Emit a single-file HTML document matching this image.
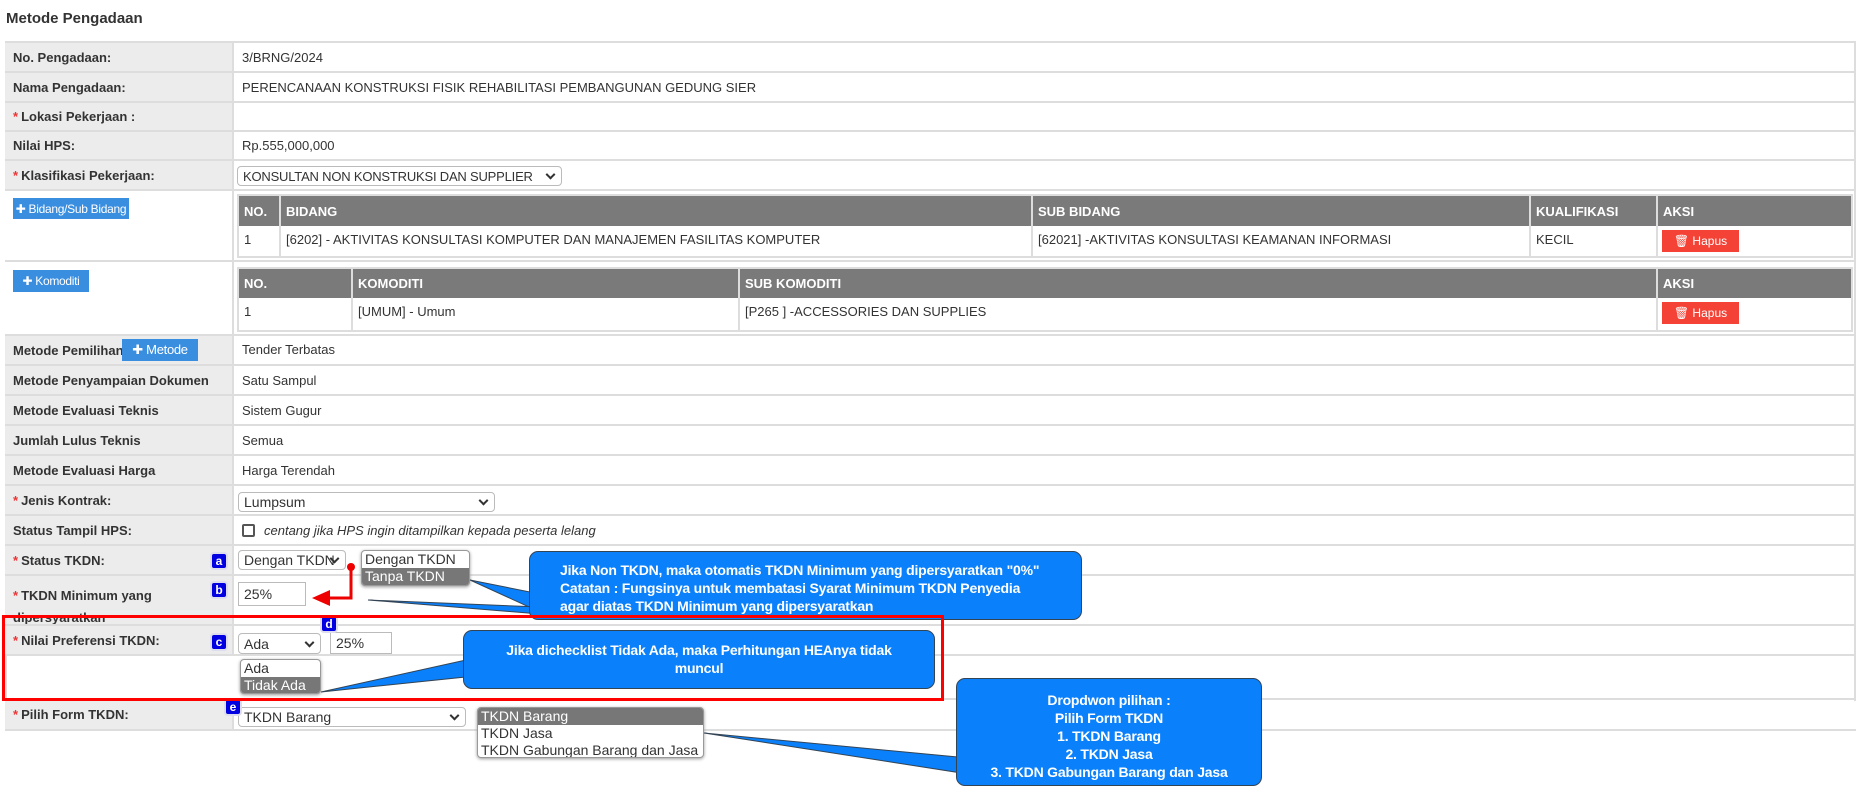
<!DOCTYPE html>
<html><head><meta charset="utf-8"><style>
*{box-sizing:border-box;margin:0;padding:0}
body{width:1860px;height:789px;background:#fff;font-family:"Liberation Sans",Arial,sans-serif;font-size:13px;color:#333;position:relative;overflow:hidden}
.a{position:absolute}
.row{position:absolute;left:5px;width:1851px;border-bottom:2px solid #ddd}
.lab{position:absolute;left:0;top:0;bottom:0;width:229px;background:#ececec;border-right:2px solid #ddd;font-weight:bold;padding-left:8px;display:flex;align-items:center;white-space:nowrap}
.val{position:absolute;left:237px;top:0;bottom:0;display:flex;align-items:center;white-space:nowrap}
.st{color:#e33;font-weight:bold;margin-right:3px}
.nt{position:absolute;border:2px solid #ddd;background:#fff}
.th{position:absolute;background:#7a7a7a;color:#fff;font-weight:bold;padding-left:5px;display:flex;align-items:center;border-right:2px solid #ddd;height:100%}
.td{position:absolute;padding:6px 5px;border-right:2px solid #ddd;height:100%;white-space:nowrap}
.btn{position:absolute;background:#3a8ee0;color:#fff;font-size:12px;display:flex;align-items:center;justify-content:center;white-space:nowrap;letter-spacing:-0.3px}
.hp{position:absolute;background:#f44336;color:#fff;font-size:12px;display:flex;align-items:center;justify-content:center}
.sel{position:absolute;border:1px solid #bbb;border-radius:4px;background:#fff;padding-left:5px;font-size:13px;display:flex;align-items:center;white-space:nowrap;overflow:hidden}
.sel:after{content:"";position:absolute;right:7px;top:50%;width:5px;height:5px;border-right:2px solid #333;border-bottom:2px solid #333;transform:translateY(-70%) rotate(45deg)}
.inp{position:absolute;border:1px solid #bbb;background:#fff;padding-left:5px;display:flex;align-items:center;font-size:14px}
.bd{position:absolute;width:18px;height:18px;background:#0000e0;color:#fff;border:2px solid #dde;border-radius:4px;font-weight:bold;font-size:12px;text-align:center;line-height:14px}
.lst{position:absolute;border:1px solid #999;border-radius:4px;background:#fff;font-size:14px;overflow:hidden;box-shadow:0 1px 3px #999;white-space:nowrap}
.lst div{padding-left:3px;height:17px;line-height:17px}
.lst .on{background:#777;color:#fff}
.co{position:absolute;background:#0a80fb;border:1px solid #345;border-radius:9px;color:#fff;font-weight:bold;font-size:14px;line-height:18px;letter-spacing:-0.2px;white-space:nowrap}
</style></head><body>
<div class="a" style="left:6px;top:10px;font-size:15px;font-weight:bold">Metode Pengadaan</div>
<div class="a" style="left:5px;top:41px;width:1851px;border-top:2px solid #ddd"></div>
<div class="a" style="left:5px;top:41px;height:690px;border-left:2px solid #ddd"></div>
<div class="a" style="left:1854px;top:41px;height:660px;border-left:2px solid #ddd"></div>

<div class="row" style="top:43px;height:30px"><div class="lab">No. Pengadaan:</div><div class="val">3/BRNG/2024</div></div>
<div class="row" style="top:73px;height:30px"><div class="lab">Nama Pengadaan:</div><div class="val">PERENCANAAN KONSTRUKSI FISIK REHABILITASI PEMBANGUNAN GEDUNG SIER</div></div>
<div class="row" style="top:103px;height:29px"><div class="lab"><span class="st">*</span>Lokasi Pekerjaan :</div></div>
<div class="row" style="top:132px;height:29px"><div class="lab">Nilai HPS:</div><div class="val">Rp.555,000,000</div></div>
<div class="row" style="top:161px;height:30px"><div class="lab"><span class="st">*</span>Klasifikasi Pekerjaan:</div></div>
<div class="sel" style="left:237px;top:166px;width:325px;height:20px;font-size:13px;letter-spacing:-0.2px">KONSULTAN NON KONSTRUKSI DAN SUPPLIER</div>

<div class="row" style="top:191px;height:71px"><div class="lab" style="background:#fff"></div></div>
<div class="btn" style="left:13px;top:198px;width:116px;height:21px">✚ Bidang/Sub Bidang</div>
<div class="nt" style="left:237px;top:194px;width:1616px;height:64px">
 <div class="a" style="left:0;top:0;width:100%;height:30px">
  <div class="th" style="left:0;width:42px">NO.</div><div class="th" style="left:42px;width:752px">BIDANG</div><div class="th" style="left:794px;width:498px">SUB BIDANG</div><div class="th" style="left:1292px;width:127px">KUALIFIKASI</div><div class="th" style="left:1419px;width:193px;border:0">AKSI</div></div>
 <div class="a" style="left:0;top:30px;width:100%;height:30px">
  <div class="td" style="left:0;width:42px">1</div><div class="td" style="left:42px;width:752px">[6202] - AKTIVITAS KONSULTASI KOMPUTER DAN MANAJEMEN FASILITAS KOMPUTER</div><div class="td" style="left:794px;width:498px">[62021] -AKTIVITAS KONSULTASI KEAMANAN INFORMASI</div><div class="td" style="left:1292px;width:127px">KECIL</div></div>
</div>
<div class="hp" style="left:1662px;top:230px;width:77px;height:22px">🗑 Hapus</div>

<div class="row" style="top:262px;height:74px"><div class="lab" style="background:#fff"></div></div>
<div class="btn" style="left:13px;top:270px;width:76px;height:22px">✚ Komoditi</div>
<div class="nt" style="left:237px;top:267px;width:1616px;height:65px">
 <div class="a" style="left:0;top:0;width:100%;height:29px">
  <div class="th" style="left:0;width:114px">NO.</div><div class="th" style="left:114px;width:387px">KOMODITI</div><div class="th" style="left:501px;width:918px">SUB KOMODITI</div><div class="th" style="left:1419px;width:193px;border:0">AKSI</div></div>
 <div class="a" style="left:0;top:29px;width:100%;height:33px">
  <div class="td" style="left:0;width:114px">1</div><div class="td" style="left:114px;width:387px">[UMUM] - Umum</div><div class="td" style="left:501px;width:918px">[P265 ] -ACCESSORIES DAN SUPPLIES</div><div class="td" style="left:1419px;width:193px;border:0"></div></div>
</div>
<div class="hp" style="left:1662px;top:302px;width:77px;height:22px">🗑 Hapus</div>

<div class="row" style="top:336px;height:30px"><div class="lab">Metode Pemilihan</div><div class="val" style="align-items:flex-start;padding-top:6px">Tender Terbatas</div></div>
<div class="btn" style="left:122px;top:339px;width:76px;height:22px;font-size:13px">✚ Metode</div>
<div class="row" style="top:366px;height:30px"><div class="lab">Metode Penyampaian Dokumen</div><div class="val">Satu Sampul</div></div>
<div class="row" style="top:396px;height:30px"><div class="lab">Metode Evaluasi Teknis</div><div class="val">Sistem Gugur</div></div>
<div class="row" style="top:426px;height:30px"><div class="lab">Jumlah Lulus Teknis</div><div class="val">Semua</div></div>
<div class="row" style="top:456px;height:30px"><div class="lab">Metode Evaluasi Harga</div><div class="val">Harga Terendah</div></div>
<div class="row" style="top:486px;height:30px"><div class="lab"><span class="st">*</span>Jenis Kontrak:</div></div>
<div class="sel" style="left:238px;top:492px;width:257px;height:20px;font-size:14px">Lumpsum</div>
<div class="row" style="top:516px;height:30px"><div class="lab">Status Tampil HPS:</div><div class="val"><span style="display:inline-block;width:13px;height:13px;border:2px solid #555;border-radius:2px;margin-right:9px"></span><i>centang jika HPS ingin ditampilkan kepada peserta lelang</i></div></div>
<div class="row" style="top:546px;height:30px"><div class="lab"><span class="st">*</span>Status TKDN:</div></div>
<div class="row" style="top:576px;height:50px"><div class="lab" style="align-items:flex-start;padding-top:9px;line-height:22px;overflow:hidden"><div><span class="st">*</span>TKDN Minimum yang<br>dipersyaratkan</div></div></div>
<div class="row" style="top:626px;height:30px"><div class="lab"><span class="st">*</span>Nilai Preferensi TKDN:</div></div>
<div class="a" style="left:5px;top:656px;width:1851px;height:44px;border-bottom:2px solid #ddd"></div>
<div class="row" style="top:700px;height:31px"><div class="lab"><span class="st">*</span>Pilih Form TKDN:</div></div>

<div class="sel" style="left:238px;top:550px;width:108px;height:20px;font-size:14px">Dengan TKDN</div>
<div class="lst" style="left:361px;top:550px;width:109px;height:36px"><div>Dengan TKDN</div><div class="on">Tanpa TKDN</div></div>
<div class="inp" style="left:238px;top:582px;width:68px;height:24px">25%</div>
<div class="sel" style="left:238px;top:633px;width:83px;height:21px;font-size:14px">Ada</div>
<div class="inp" style="left:330px;top:632px;width:62px;height:22px">25%</div>
<div class="lst" style="left:240px;top:659px;width:81px;height:35px"><div>Ada</div><div class="on">Tidak Ada</div></div>
<div class="sel" style="left:238px;top:707px;width:228px;height:20px;font-size:14px">TKDN Barang</div>
<div class="lst" style="left:477px;top:707px;width:227px;height:51px;border-radius:4px"><div class="on">TKDN Barang</div><div>TKDN Jasa</div><div>TKDN Gabungan Barang dan Jasa</div></div>

<div class="bd" style="left:210px;top:552px">a</div>
<div class="bd" style="left:210px;top:581px">b</div>
<div class="bd" style="left:210px;top:633px">c</div>
<div class="bd" style="left:320px;top:615px">d</div>
<div class="bd" style="left:224px;top:698px">e</div>

<svg class="a" style="left:0;top:0" width="1860" height="789">
<path d="M351 567 V598 H325" stroke="#e00" stroke-width="3" fill="none"/>
<circle cx="351" cy="567" r="4" fill="#e00"/>
<polygon points="312,598 330,590 330,606" fill="#e00"/>
<polygon points="470,580 540,594 540,612" fill="#0a80fb" stroke="#345" stroke-width="1"/>
<polygon points="368,600 540,607 540,614" fill="#0a80fb" stroke="#345" stroke-width="1"/>
<polygon points="321,692 475,658 475,676" fill="#0a80fb" stroke="#345" stroke-width="1"/>
<polygon points="704,733 968,758 968,774" fill="#0a80fb" stroke="#345" stroke-width="1"/>
</svg>
<div class="co" style="left:529px;top:551px;width:553px;height:69px;padding:9px 0 0 30px">Jika Non TKDN, maka otomatis TKDN Minimum yang dipersyaratkan "0%"<br>Catatan : Fungsinya untuk membatasi Syarat Minimum TKDN Penyedia<br>agar diatas TKDN Minimum yang dipersyaratkan</div>
<div class="a" style="left:2px;top:615px;width:942px;height:86px;border:3px solid #f00"></div>
<div class="co" style="left:463px;top:630px;width:472px;height:59px;padding-top:10px;text-align:center">Jika dichecklist Tidak Ada, maka Perhitungan HEAnya tidak<br>muncul</div>
<div class="co" style="left:956px;top:678px;width:306px;height:108px;padding-top:12px;text-align:center">Dropdwon pilihan :<br>Pilih Form TKDN<br>1. TKDN Barang<br>2. TKDN Jasa<br>3. TKDN Gabungan Barang dan Jasa</div>
</body></html>
